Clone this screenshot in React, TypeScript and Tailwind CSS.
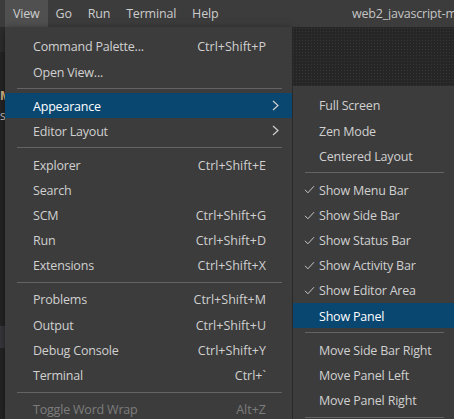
import React from "react";

type Entry =
  | { sep: true }
  | {
      sep?: false;
      label: string;
      keys?: string;
      sub?: boolean;
      active?: boolean;
      disabled?: boolean;
      checked?: boolean;
    };

const MAIN_MENU: Entry[] = [
  { label: "Command Palette...", keys: "Ctrl+Shift+P" },
  { label: "Open View..." },
  { sep: true },
  { label: "Appearance", sub: true, active: true },
  { label: "Editor Layout", sub: true },
  { sep: true },
  { label: "Explorer", keys: "Ctrl+Shift+E" },
  { label: "Search" },
  { label: "SCM", keys: "Ctrl+Shift+G" },
  { label: "Run", keys: "Ctrl+Shift+D" },
  { label: "Extensions", keys: "Ctrl+Shift+X" },
  { sep: true },
  { label: "Problems", keys: "Ctrl+Shift+M" },
  { label: "Output", keys: "Ctrl+Shift+U" },
  { label: "Debug Console", keys: "Ctrl+Shift+Y" },
  { label: "Terminal", keys: "Ctrl+`" },
  { sep: true },
  { label: "Toggle Word Wrap", keys: "Alt+Z", disabled: true },
];

const APPEARANCE_MENU: Entry[] = [
  { label: "Full Screen" },
  { label: "Zen Mode" },
  { label: "Centered Layout" },
  { sep: true },
  { label: "Show Menu Bar", checked: true },
  { label: "Show Side Bar", checked: true },
  { label: "Show Status Bar", checked: true },
  { label: "Show Activity Bar", checked: true },
  { label: "Show Editor Area", checked: true },
  { label: "Show Panel", active: true },
  { sep: true },
  { label: "Move Side Bar Right" },
  { label: "Move Panel Left" },
  { label: "Move Panel Right" },
  { sep: true },
];

const MENUBAR = ["View", "Go", "Run", "Terminal", "Help"];

function Check() {
  return (
    <svg width="11" height="9" viewBox="0 0 11 9" fill="none">
      <polyline points="1,4.8 3.9,7.8 10,1.2" stroke="#c8c8c8" strokeWidth="1" />
    </svg>
  );
}

function Chevron() {
  return (
    <svg width="7" height="11" viewBox="0 0 7 11" fill="none">
      <polyline points="1,1 6,5.5 1,10" stroke="#d0d0d0" strokeWidth="1.2" />
    </svg>
  );
}

function Separator() {
  return (
    <div className="h-[8.8px] flex items-center pl-[12px] pr-[10px]">
      <div className="h-px w-full bg-[#646464]" />
    </div>
  );
}

function MainMenu() {
  return (
    <div className="w-[287px] bg-[#3c3c3c] pt-[7px] shadow-[0_2px_8px_rgba(0,0,0,0.5)]">
      {MAIN_MENU.map((e, i) =>
        e.sep ? (
          <Separator key={i} />
        ) : (
          <div
            key={i}
            className={`h-[25.2px] flex items-center pt-[2px] pl-[28px] pr-[26px] ${
              e.active ? "bg-[#094771] text-white" : ""
            } ${e.disabled ? "text-[#7c7c7c]" : "text-[#d0d0d0]"}`}
          >
            <span className="flex-1 whitespace-nowrap">{e.label}</span>
            {e.keys && <span className="whitespace-nowrap tracking-[0px]">{e.keys}</span>}
            {e.sub && (
              <span className="-mr-[13px] -mt-[2px] flex items-center">
                <Chevron />
              </span>
            )}
          </div>
        )
      )}
    </div>
  );
}

function SubMenu() {
  return (
    <div className="flex-1 bg-[#3c3c3c] pt-[7px] border-l border-[#2a2a2a]">
      {APPEARANCE_MENU.map((e, i) =>
        e.sep ? (
          <Separator key={i} />
        ) : (
          <div
            key={i}
            className={`h-[25.2px] flex items-center pt-[2px] ${
              e.active ? "bg-[#094771] text-white" : "text-[#d0d0d0]"
            }`}
          >
            <span className="w-[26px] -mt-[2px] flex justify-end pr-[4px]">{e.checked && <Check />}</span>
            <span className="whitespace-nowrap">{e.label}</span>
          </div>
        )
      )}
    </div>
  );
}

export default function App() {
  return (
    <div className="w-[454px] h-[419px] overflow-hidden flex flex-col bg-[#252526] font-['Segoe_UI','Open_Sans',sans-serif] text-[12.5px] tracking-[-0.2px] leading-none">
      {/* Title bar */}
      <div className="h-[27px] shrink-0 flex items-center bg-[#3c3c3c] text-[#cccccc]">
        <div className="w-[5px]" />
        {MENUBAR.map((m, i) => (
          <div
            key={m}
            className={`h-full flex items-center pt-[1px] px-[8px] ${i === 0 ? "bg-[#505050]" : ""}`}
          >
            {m}
          </div>
        ))}
        <div className="flex-1" />
        <div className="w-[102px] pt-[1px] whitespace-nowrap overflow-hidden text-[#c4c4c4]">
          web2_javascript-ma
        </div>
      </div>

      {/* Body */}
      <div className="flex-1 flex min-h-0">
        {/* Editor edge peeking at left */}
        <div className="w-[5px] shrink-0 flex flex-col bg-[#252526] overflow-hidden">
          <div className="h-[25px] bg-[#2d2d2d]" />
          <div className="h-[34px]" />
          <div className="h-[20px] text-[#e2c08d] text-[12px] flex items-center font-bold">M</div>
          <div className="h-[20px] text-[#cccccc] text-[12px] flex items-center">s</div>
          <div className="h-[200px]" />
          <div className="h-[22px] bg-[#37373d]" />
        </div>

        <MainMenu />

        <div className="flex-1 flex flex-col min-w-0">
          <div className="h-[59px] shrink-0 bg-[#262626] bg-[radial-gradient(circle,#363636_0.7px,transparent_0.9px)] bg-[length:3px_3px]" />
          <SubMenu />
        </div>
      </div>
    </div>
  );
}
